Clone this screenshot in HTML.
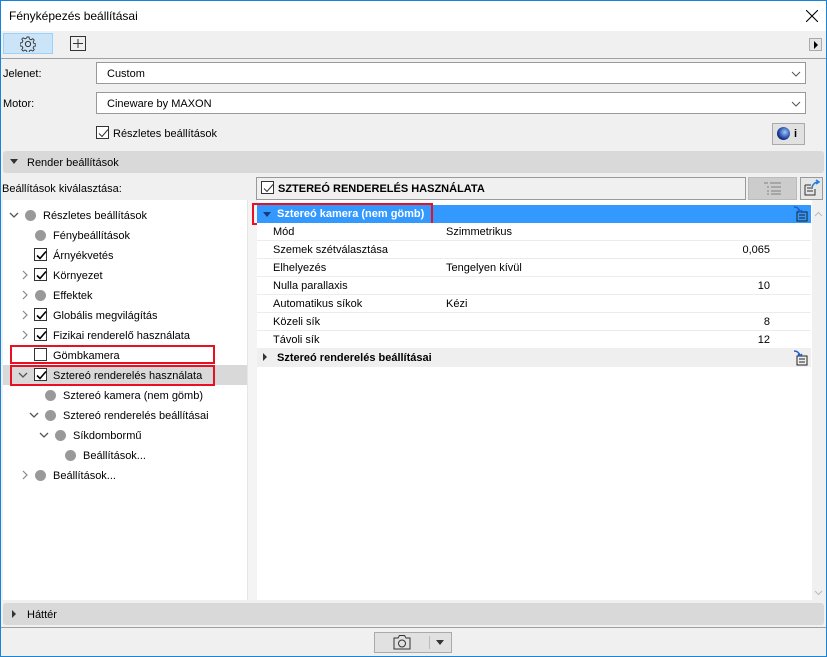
<!DOCTYPE html>
<html><head><meta charset="utf-8"><style>
*{box-sizing:border-box;margin:0;padding:0}
body{width:827px;height:657px;overflow:hidden;font-family:"Liberation Sans",sans-serif;font-size:11px;color:#000;background:#f0f0f0;position:relative}
.a{position:absolute}
.t{position:absolute;white-space:nowrap;line-height:16px}
.cb{position:absolute;width:13px;height:13px;border:1px solid #333;background:#fff}
.cb svg{position:absolute;left:1px;top:1px}
.dot{position:absolute;width:11px;height:11px;border-radius:50%;background:#999}
.dn,.rt{position:absolute}
</style></head><body>
<div class="a" style="left:0;top:0;width:827px;height:657px;border:1px solid #1883d7"></div>
<div class="a" style="left:1px;top:1px;width:825px;height:30px;background:#fff"></div>
<div class="t" style="left:9px;top:8px;font-size:12px">Fényképezés beállításai</div>
<svg class="a" style="left:806px;top:10px" width="12" height="12"><path d="M0 0L12 12M12 0L0 12" stroke="#000" stroke-width="1.1"/></svg>
<div class="a" style="left:3px;top:33px;width:50px;height:21px;background:#cce4f7;border:1px solid #99d1ff"></div>
<svg class="a" style="left:20px;top:36px" width="16" height="16" viewBox="0 0 16 16"><circle cx="8" cy="8" r="2.6" fill="none" stroke="#333"/><path d="M7 1h2l.4 2 1.6.8 1.8-1.1 1.4 1.4-1.1 1.8.8 1.6 2 .4v2l-2 .4-.8 1.6 1.1 1.8-1.4 1.4-1.8-1.1-1.6.8-.4 2H7l-.4-2-1.6-.8-1.8 1.1-1.4-1.4 1.1-1.8-.8-1.6-2-.4V7l2-.4.8-1.6-1.1-1.8 1.4-1.4 1.8 1.1 1.6-.8z" fill="none" stroke="#333" stroke-width=".9"/></svg>
<svg class="a" style="left:70px;top:36px" width="16" height="15"><rect x=".5" y=".5" width="15" height="14" fill="none" stroke="#333"/><path d="M8 3v9M3 7.5h10" stroke="#333"/></svg>
<div class="a" style="left:809px;top:38px;width:13px;height:13px;border:1px solid #aaa;background:#e6e6e6"></div>
<div class="a" style="left:814px;top:41px;border-left:4px solid #000;border-top:4px solid transparent;border-bottom:4px solid transparent"></div>
<div class="a" style="left:1px;top:58px;width:825px;height:1px;background:#a0a0a0"></div>
<div class="t" style="left:3px;top:66px">Jelenet:</div>
<div class="a" style="left:96px;top:62px;width:710px;height:22px;border:1px solid #999;background:#fff"></div>
<div class="t" style="left:107px;top:66px">Custom</div>
<svg class="a" style="left:791px;top:71px" width="10" height="6"><path d="M1 1l4 4 4-4" stroke="#555" fill="none"/></svg>
<div class="t" style="left:3px;top:96px">Motor:</div>
<div class="a" style="left:96px;top:92px;width:710px;height:22px;border:1px solid #999;background:#fff"></div>
<div class="t" style="left:107px;top:96px">Cineware by MAXON</div>
<svg class="a" style="left:791px;top:101px" width="10" height="6"><path d="M1 1l4 4 4-4" stroke="#555" fill="none"/></svg>
<div class="cb" style="left:96px;top:126px"><svg width="11" height="11"><path d="M1 5.5l3 3 6-7" stroke="#333" fill="none"/></svg></div>
<div class="t" style="left:113px;top:126px">Részletes beállítások</div>
<div class="a" style="left:772px;top:123px;width:33px;height:22px;border:1px solid #aaa;background:#e1e1e1"></div>
<div class="a" style="left:777px;top:127px;width:13px;height:13px;border-radius:50%;background:radial-gradient(circle at 60% 40%,#9cf,#1a3a9a 60%,#000)"></div>
<div class="t" style="left:794px;top:126px;font-weight:bold;font-size:11px">i</div>
<div class="a" style="left:3px;top:151px;width:821px;height:22px;background:#d9d9d9;border-radius:3px"></div>
<div class="a" style="left:10px;top:159px;border-top:5px solid #333;border-left:4px solid transparent;border-right:4px solid transparent"></div>
<div class="t" style="left:27px;top:155px">Render beállítások</div>
<div class="t" style="left:2px;top:181px">Beállítások kiválasztása:</div>
<div class="a" style="left:256px;top:177px;width:490px;height:23px;border:1px solid #999;background:#f0f0f0"></div>
<div class="cb" style="left:261px;top:181px"><svg width="11" height="11"><path d="M1 5.5l3 3 6-7" stroke="#333" fill="none"/></svg></div>
<div class="t" style="left:278px;top:181px;font-weight:bold">SZTEREÓ RENDERELÉS HASZNÁLATA</div>
<div class="a" style="left:748px;top:177px;width:49px;height:23px;background:#ccc;border:1px solid #bbb"></div>
<svg class="a" style="left:763px;top:182px" width="20" height="13"><path d="M1 1h4M7 1h11M4 5h2M8 5h10M4 9h2M8 9h10M4 12h2M8 12h10" stroke="#999" stroke-width="1.5"/></svg>
<div class="a" style="left:800px;top:177px;width:23px;height:23px;background:#e6e6e6;border:1px solid #999"></div>
<svg class="a" style="left:803px;top:179px" width="18" height="18"><path d="M2 6h6M2 6v10h10v-6M4 9h6M4 12h6" stroke="#333" fill="none"/><path d="M9 8q2-5 6-5M13 1l3 2-3 2" stroke="#1a7fe0" stroke-width="1.5" fill="none"/></svg>
<div class="a" style="left:3px;top:200px;width:244px;height:400px;background:#fff"></div>
<div class="a" style="left:247px;top:200px;width:10px;height:400px;background:#f4f4f4;border-left:1px solid #e6e6e6"></div>
<div class="a" style="left:257px;top:200px;width:555px;height:400px;background:#fff"></div>
<div class="a" style="left:812px;top:200px;width:12px;height:400px;background:#f0f0f0"></div>
<svg class="a" style="left:814px;top:211px" width="9" height="6"><path d="M1 5l3.5-3.5L8 5" stroke="#bbb" fill="none"/></svg>
<svg class="a" style="left:814px;top:590px" width="9" height="6"><path d="M1 1l3.5 3.5L8 1" stroke="#bbb" fill="none"/></svg>
<!-- tree -->
<div class="a" style="left:3px;top:365px;width:244px;height:20px;background:#d9d9d9"></div>
<svg class="dn" style="left:9px;top:212px" width="10" height="6"><path d="M1 1l4 4 4-4" stroke="#555" fill="none" stroke-width="1.3"/></svg>
<div class="dot" style="left:25px;top:210px"></div><div class="t" style="left:43px;top:208px">Részletes beállítások</div>
<div class="dot" style="left:35px;top:230px"></div><div class="t" style="left:53px;top:228px">Fénybeállítások</div>
<div class="cb" style="left:34px;top:248px"><svg width="11" height="11"><path d="M1 5.5l3 3 6-7" stroke="#000" stroke-width="1.6" fill="none"/></svg></div><div class="t" style="left:53px;top:248px">Árnyékvetés</div>
<svg class="rt" style="left:22px;top:270px" width="6" height="10"><path d="M1 1l4 4-4 4" stroke="#888" fill="none" stroke-width="1.2"/></svg>
<div class="cb" style="left:34px;top:268px"><svg width="11" height="11"><path d="M1 5.5l3 3 6-7" stroke="#000" stroke-width="1.6" fill="none"/></svg></div><div class="t" style="left:53px;top:268px">Környezet</div>
<svg class="rt" style="left:22px;top:290px" width="6" height="10"><path d="M1 1l4 4-4 4" stroke="#888" fill="none" stroke-width="1.2"/></svg>
<div class="dot" style="left:35px;top:290px"></div><div class="t" style="left:53px;top:288px">Effektek</div>
<svg class="rt" style="left:22px;top:310px" width="6" height="10"><path d="M1 1l4 4-4 4" stroke="#888" fill="none" stroke-width="1.2"/></svg>
<div class="cb" style="left:34px;top:308px"><svg width="11" height="11"><path d="M1 5.5l3 3 6-7" stroke="#000" stroke-width="1.6" fill="none"/></svg></div><div class="t" style="left:53px;top:308px">Globális megvilágítás</div>
<svg class="rt" style="left:22px;top:330px" width="6" height="10"><path d="M1 1l4 4-4 4" stroke="#888" fill="none" stroke-width="1.2"/></svg>
<div class="cb" style="left:34px;top:328px"><svg width="11" height="11"><path d="M1 5.5l3 3 6-7" stroke="#000" stroke-width="1.6" fill="none"/></svg></div><div class="t" style="left:53px;top:328px">Fizikai renderelő használata</div>
<div class="cb" style="left:34px;top:348px"></div><div class="t" style="left:53px;top:348px">Gömbkamera</div>
<svg class="dn" style="left:18px;top:372px" width="10" height="6"><path d="M1 1l4 4 4-4" stroke="#555" fill="none" stroke-width="1.3"/></svg>
<div class="cb" style="left:34px;top:368px"><svg width="11" height="11"><path d="M1 5.5l3 3 6-7" stroke="#000" stroke-width="1.6" fill="none"/></svg></div><div class="t" style="left:53px;top:368px">Sztereó renderelés használata</div>
<div class="a" style="left:10px;top:345px;width:205px;height:19px;border:2px solid #e81123"></div>
<div class="a" style="left:10px;top:365px;width:205px;height:21px;border:2px solid #e81123"></div>
<div class="dot" style="left:45px;top:390px"></div><div class="t" style="left:63px;top:388px">Sztereó kamera (nem gömb)</div>
<svg class="dn" style="left:29px;top:412px" width="10" height="6"><path d="M1 1l4 4 4-4" stroke="#555" fill="none" stroke-width="1.3"/></svg>
<div class="dot" style="left:45px;top:410px"></div><div class="t" style="left:63px;top:408px">Sztereó renderelés beállításai</div>
<svg class="dn" style="left:39px;top:432px" width="10" height="6"><path d="M1 1l4 4 4-4" stroke="#555" fill="none" stroke-width="1.3"/></svg>
<div class="dot" style="left:55px;top:430px"></div><div class="t" style="left:73px;top:428px">Síkdombormű</div>
<div class="dot" style="left:65px;top:450px"></div><div class="t" style="left:83px;top:448px">Beállítások...</div>
<svg class="rt" style="left:22px;top:470px" width="6" height="10"><path d="M1 1l4 4-4 4" stroke="#888" fill="none" stroke-width="1.2"/></svg>
<div class="dot" style="left:35px;top:470px"></div><div class="t" style="left:53px;top:468px">Beállítások...</div>
<!-- right -->
<div class="a" style="left:257px;top:205px;width:554px;height:18px;background:#3399ff"></div>
<div class="a" style="left:263px;top:212px;border-top:5px solid #1a3a7a;border-left:4px solid transparent;border-right:4px solid transparent"></div>
<div class="t" style="left:277px;top:206px;color:#fff;font-weight:bold">Sztereó kamera (nem gömb)</div>
<svg class="a" style="left:793px;top:205px" width="16" height="17"><path d="M4 7h10v9H4zM6 10h6M6 13h6" stroke="#222" fill="none"/><path d="M1 2q5 0 6 5M5 5l2 2 2-2" stroke="#1a5fd0" stroke-width="1.5" fill="none"/></svg>
<div class="a" style="left:252px;top:203px;width:181px;height:22px;border:2px solid #e81123"></div>
<div class="a" style="left:257px;top:223px;width:554px;height:126px;background:repeating-linear-gradient(#fff 0 17px,#ececec 17px 18px)"></div>
<div class="t" style="left:273px;top:224px">Mód</div><div class="t" style="left:446px;top:224px">Szimmetrikus</div>
<div class="t" style="left:273px;top:242px">Szemek szétválasztása</div><div class="t" style="left:700px;top:242px;width:70px;text-align:right">0,065</div>
<div class="t" style="left:273px;top:260px">Elhelyezés</div><div class="t" style="left:446px;top:260px">Tengelyen kívül</div>
<div class="t" style="left:273px;top:278px">Nulla parallaxis</div><div class="t" style="left:700px;top:278px;width:70px;text-align:right">10</div>
<div class="t" style="left:273px;top:296px">Automatikus síkok</div><div class="t" style="left:446px;top:296px">Kézi</div>
<div class="t" style="left:273px;top:314px">Közeli sík</div><div class="t" style="left:700px;top:314px;width:70px;text-align:right">8</div>
<div class="t" style="left:273px;top:332px">Távoli sík</div><div class="t" style="left:700px;top:332px;width:70px;text-align:right">12</div>
<div class="a" style="left:257px;top:348px;width:554px;height:19px;background:#efefef"></div>
<div class="a" style="left:263px;top:353px;border-left:4px solid #333;border-top:4px solid transparent;border-bottom:4px solid transparent"></div>
<div class="t" style="left:277px;top:350px;font-weight:bold">Sztereó renderelés beállításai</div>
<svg class="a" style="left:793px;top:349px" width="16" height="17"><path d="M4 7h10v9H4zM6 10h6M6 13h6" stroke="#222" fill="none"/><path d="M1 2q5 0 6 5M5 5l2 2 2-2" stroke="#1a5fd0" stroke-width="1.5" fill="none"/></svg>
<!-- bottom -->
<div class="a" style="left:3px;top:603px;width:821px;height:22px;background:#d9d9d9;border-radius:3px"></div>
<div class="a" style="left:12px;top:610px;border-left:4px solid #333;border-top:4px solid transparent;border-bottom:4px solid transparent"></div>
<div class="t" style="left:27px;top:607px">Háttér</div>
<div class="a" style="left:1px;top:627px;width:825px;height:1px;background:#a0a0a0"></div>
<div class="a" style="left:374px;top:632px;width:78px;height:21px;border:1px solid #aaa;background:#e1e1e1"></div>
<svg class="a" style="left:393px;top:634px" width="18" height="16"><path d="M1 4h4l1.5-2.5h5L13 4h4v11H1z" fill="none" stroke="#333"/><circle cx="9" cy="9.5" r="3.5" fill="none" stroke="#333"/></svg>
<div class="a" style="left:429px;top:636px;width:1px;height:13px;background:#bbb"></div>
<div class="a" style="left:436px;top:640px;border-top:5px solid #333;border-left:4px solid transparent;border-right:4px solid transparent"></div>
</body></html>
